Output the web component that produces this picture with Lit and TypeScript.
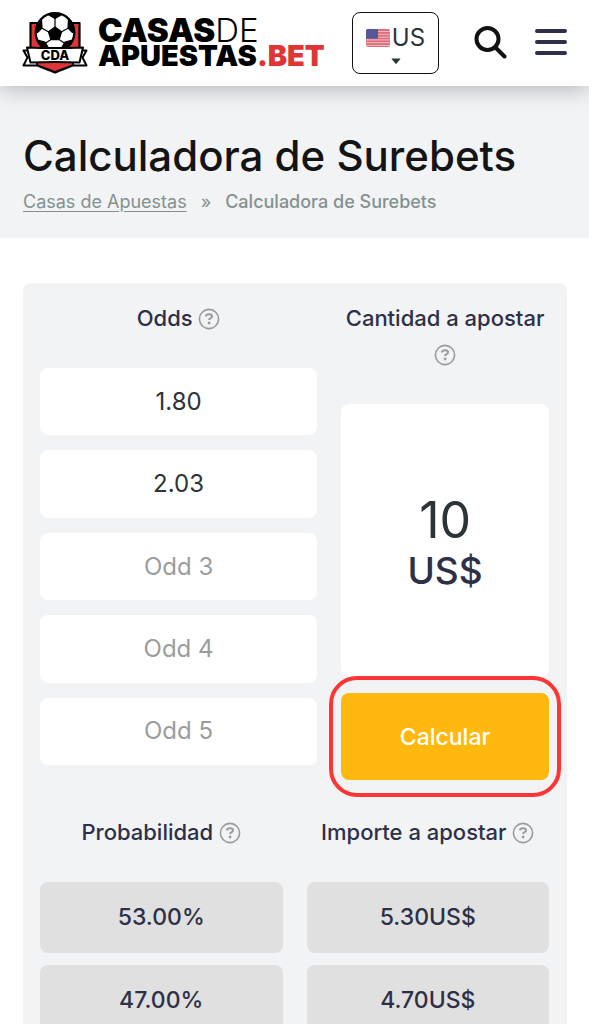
import { LitElement, html, css, svg } from "lit";
import { customElement, property, state } from "lit/decorators.js";

@customElement("help-icon")
class HelpIcon extends LitElement {
  @property() label = "";

  static styles = css`
    :host {
      display: inline-block;
      vertical-align: -4px;
    }
    .help {
      display: block;
      width: 22px;
      height: 22px;
      padding: 0;
      border: 0;
      background: none;
      color: #9b9b9b;
      cursor: pointer;
    }
    svg {
      display: block;
    }
  `;

  render() {
    return html`<button class="help" type="button" aria-label=${this.label}>
      <svg width="22" height="22" viewBox="0 0 22 22" fill="none" stroke="currentColor">
        <circle cx="11" cy="11" r="9.6" stroke-width="1.6" />
        <path d="M8 8.6C8 7.1 9.2 6.300 11 6.300s3 .8 3 2.100c0 1.900-2.900 1.700-2.900 3.700" stroke-width="2" />
        <circle cx="11.1" cy="15" r="1.4" fill="currentColor" stroke="none" />
      </svg>
    </button>`;
  }
}

@customElement("site-header")
class SiteHeader extends LitElement {
  static styles = css`
    :host {
      display: block;
      position: relative;
      background: #fff;
      box-shadow: 0 2px 22px rgba(0, 0, 0, 0.28);
    }
    .bar {
      display: flex;
      align-items: center;
      height: 86px;
      padding: 0 22px;
      box-sizing: border-box;
    }
    .logo {
      display: flex;
      align-items: center;
      gap: 10px;
      color: #000;
      text-decoration: none;
      margin-right: auto;
    }
    .emblem,
    .flag,
    .arrow,
    .icon svg {
      display: block;
      flex: none;
    }
    .words {
      display: flex;
      flex-direction: column;
      padding-top: 2px;
      font-weight: 900;
      white-space: nowrap;
    }
    .top {
      font-size: 33px;
      line-height: 24px;
    }
    .bottom {
      font-size: 29px;
      line-height: 28px;
    }
    .thin {
      font-weight: 300;
    }
    .red {
      color: #e03535;
    }
    .country {
      display: flex;
      flex-direction: column;
      align-items: center;
      justify-content: center;
      gap: 5px;
      width: 87px;
      height: 62px;
      box-sizing: border-box;
      border: 1px solid #111;
      border-radius: 8px;
    }
    .pick {
      display: flex;
      align-items: center;
      gap: 2px;
    }
    select {
      appearance: none;
      field-sizing: content;
      border: 0;
      padding: 0;
      margin: 0;
      background: none;
      font: 400 24px/30px Inter, sans-serif;
      color: #2b3436;
    }
    .icon {
      padding: 0;
      border: 0;
      background: none;
      cursor: pointer;
    }
    .search {
      margin-left: 35px;
    }
    .menu {
      margin-left: 28px;
    }
  `;

  render() {
    return html`<header class="bar">
      <a class="logo" href="#" aria-label="Casas de Apuestas .bet">
        <svg class="emblem" width="66" height="62" viewBox="0 0 66 62">
          <path d="M8.500 11h49v38c-6 6-16 7-24.500 11.500C24.500 56 14.500 55 8.500 49Z" fill="#e03535" stroke="#000" stroke-width="2.2" stroke-linejoin="round" />
          <circle cx="33" cy="20.500" r="19.300" fill="#fff" stroke="#000" stroke-width="2.2" />
          <g fill="#000" stroke="#000" stroke-width="1.2" stroke-linejoin="round">
            <path d="M33 15l6.600 4.800-2.500 7.800h-8.200l-2.500-7.800Z" />
            <path d="M26 2.500Q33 0 40 2.500L33 6.500Z" />
            <path d="M46.500 7l5.500 9-1.500 4.500-4.500-4.500Z" />
            <path d="M19.500 7l-5.500 9 1.500 4.500 4.500-4.500Z" />
            <path d="M50.500 28l-5 8h-6l3.500-6Z" />
            <path d="M15.500 28l5 8h6l-3.500-6Z" />
            <path d="M33 6v9M39.600 19.800l6.400-3.500M37.100 27.600l5 3.400M28.900 27.600l-5 3.400M26.400 19.800L20 16.300" fill="none" />
          </g>
          <g fill="#fff" stroke="#000" stroke-width="2" stroke-linejoin="round">
            <path d="M9 38.500H1.500l4 7-4 8H15V45Z" />
            <path d="M57 38.500h7.500l-4 7 4 8H51V45Z" />
            <path d="M5 35.500q28 1 56 0L57.500 50.500q-24.500-1-49 0Z" />
          </g>
          <text x="33" y="48" text-anchor="middle" font-family="Inter, sans-serif" font-weight="800" font-size="13">CDA</text>
        </svg>
        <span class="words">
          <span class="top">CASAS<span class="thin">DE</span></span>
          <span class="bottom">APUESTAS<span class="red">.BET</span></span>
        </span>
      </a>
      <label class="country">
        <span class="pick">
          <svg class="flag" width="24" height="18" viewBox="0 0 24 18" aria-hidden="true">
            <clipPath id="r"><rect width="24" height="18" rx="2" /></clipPath>
            <g clip-path="url(#r)">
              <rect width="24" height="18" fill="#dd6f7c" />
              ${[2, 4.8, 7.6, 10.4, 13.2, 16].map(
                (y) => svg`<rect y=${y} width="24" height="1" fill="#efb9c1" />`
              )}
              <rect width="12" height="9.600" fill="#56569a" />
            </g>
          </svg>
          <select aria-label="País">
            <option>US</option>
          </select>
        </span>
        <svg class="arrow" width="10" height="6" viewBox="0 0 10 6" aria-hidden="true">
          <path d="M1 .5h8q.7 0 .3.600L5.600 5.400q-.6.600-1.200 0L.7 1.100Q.3.500 1 .5Z" fill="#2b3436" />
        </svg>
      </label>
      <button class="icon search" type="button" aria-label="Buscar">
        <svg width="33" height="34" viewBox="0 0 33 34" fill="none" stroke="#111" stroke-linecap="round">
          <circle cx="13.500" cy="13" r="11" stroke-width="4" />
          <path d="M21.500 21.500l9 9" stroke-width="4" />
        </svg>
      </button>
      <button class="icon menu" type="button" aria-label="Menú">
        <svg width="32" height="28" viewBox="0 0 32 28" stroke="#2d3047" stroke-width="4" stroke-linecap="round">
          <path d="M2 2h28M2 13h28M2 24h28" />
        </svg>
      </button>
    </header>`;
  }
}

@customElement("app-root")
class AppRoot extends LitElement {
  @state() private odds = ["1.80", "2.03", "", "", ""];
  @state() private results = [
    ["53.00%", "5.30US$"],
    ["47.00%", "4.70US$"],
  ];

  static styles = css`
    :host {
      display: block;
      background: #fff;
      color: #2d3047;
      font-family: Inter, sans-serif;
    }
    .hero {
      background: #f1f3f5;
      padding: 42px 23px 23px;
    }
    h1 {
      margin: 0;
      font-size: 42px;
      line-height: 56px;
      font-weight: 500;
      color: #141414;
    }
    .crumbs {
      display: flex;
      gap: 14px;
      padding-top: 5px;
      font-size: 18px;
      line-height: 26px;
      color: #84918f;
    }
    .crumbs a {
      color: inherit;
      text-underline-offset: 3px;
    }
    .current {
      font-weight: 500;
    }
    .card {
      margin: 45px 22px 0 23px;
      padding: 17px 18px 24px 17px;
      border-radius: 8px;
      background: #f1f3f5;
    }
    .form {
      display: grid;
      grid-template-columns: minmax(0, 4fr) minmax(0, 3fr);
      column-gap: 24px;
      min-height: 480px;
    }
    .column {
      display: flex;
      flex-direction: column;
    }
    .title {
      margin: 0 0 32px;
      font-size: 22px;
      line-height: 36px;
      font-weight: 500;
      text-align: center;
    }
    .odd {
      flex: 1;
      min-width: 0;
      min-height: 0;
      box-sizing: border-box;
      margin: 0 0 15px;
      padding: 0 16px;
      border: 0;
      border-radius: 8px;
      background: #fff;
      font: 400 24px/30px Inter, sans-serif;
      color: #2b3436;
      text-align: center;
    }
    .odd::placeholder {
      color: #9c9c9c;
      opacity: 1;
    }
    .amount {
      flex: 1;
      display: flex;
      flex-direction: column;
      align-items: center;
      justify-content: center;
      margin-bottom: 16px;
      padding-top: 6px;
      border-radius: 8px;
      background: #fff;
    }
    .amount input {
      width: 100%;
      box-sizing: border-box;
      padding: 0;
      border: 0;
      background: none;
      font: 400 50px/54px Inter, sans-serif;
      color: #2b3436;
      text-align: center;
    }
    .unit {
      font-size: 37px;
      line-height: 48px;
      font-weight: 500;
    }
    .action {
      position: relative;
      display: flex;
    }
    .ring {
      position: absolute;
      inset: -17px -12px;
      border: 4px solid #ff3535;
      border-radius: 28px;
      pointer-events: none;
    }
    .calculate {
      flex: 1;
      height: 87px;
      padding: 0;
      border: 0;
      border-radius: 8px;
      background: #ffb80e;
      color: #fff;
      font: 500 23px/30px Inter, sans-serif;
      cursor: pointer;
    }
    .results,
    .results thead {
      display: block;
    }
    .results {
      margin-top: 34px;
    }
    .results tr {
      display: grid;
      grid-template-columns: 1fr 1fr;
      column-gap: 24px;
    }
    .results th {
      padding: 0;
      white-space: nowrap;
    }
    .results tbody {
      display: grid;
      row-gap: 12px;
    }
    .results td {
      padding: 20px 0;
      border-radius: 8px;
      background: #e0e0e0;
      font-size: 23px;
      line-height: 31px;
      font-weight: 500;
      text-align: center;
    }
  `;

  private setOdd(index: number, event: Event) {
    const value = (event.target as HTMLInputElement).value;
    this.odds = this.odds.map((odd, i) => (i === index ? value : odd));
  }

  render() {
    return html`
      <site-header></site-header>
      <section class="hero">
        <h1>Calculadora de Surebets</h1>
        <nav class="crumbs">
          <a href="#">Casas de Apuestas</a>
          <span>»</span>
          <span class="current">Calculadora de Surebets</span>
        </nav>
      </section>
      <main class="card">
        <form class="form" @submit=${(e: Event) => e.preventDefault()}>
          <div class="column">
            <h2 class="title">Odds <help-icon label="Ayuda: Odds"></help-icon></h2>
            ${this.odds.map(
              (odd, i) => html`<input
                class="odd"
                inputmode="decimal"
                aria-label=${`Odd ${i + 1}`}
                placeholder=${`Odd ${i + 1}`}
                .value=${odd}
                @input=${(e: Event) => this.setOdd(i, e)}
              />`
            )}
          </div>
          <div class="column">
            <h2 class="title">
              <label for="stake">Cantidad a apostar</label>
              <help-icon label="Ayuda: Cantidad a apostar"></help-icon>
            </h2>
            <div class="amount">
              <input id="stake" inputmode="decimal" .value=${"10"} />
              <span class="unit">US$</span>
            </div>
            <div class="action">
              <button class="calculate" type="submit">Calcular</button>
              <span class="ring"></span>
            </div>
          </div>
        </form>
        <table class="results">
          <thead>
            <tr>
              <th class="title">Probabilidad <help-icon label="Ayuda: Probabilidad"></help-icon></th>
              <th class="title">Importe a apostar <help-icon label="Ayuda: Importe a apostar"></help-icon></th>
            </tr>
          </thead>
          <tbody>
            ${this.results.map(
              (row) => html`<tr>${row.map((cell) => html`<td>${cell}</td>`)}</tr>`
            )}
          </tbody>
        </table>
      </main>
    `;
  }
}
